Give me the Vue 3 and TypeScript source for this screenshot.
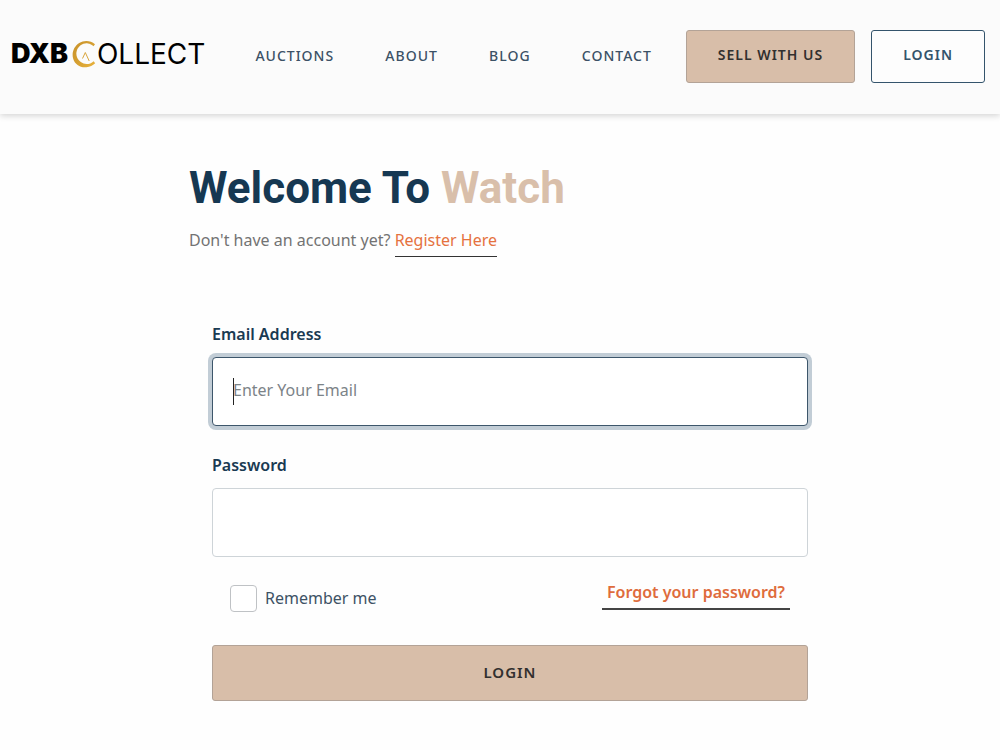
<script setup lang="ts">
import { onMounted, ref } from 'vue'

interface NavLink {
  label: string
  href: string
}

const links: NavLink[] = [
  { label: 'AUCTIONS', href: '#auctions' },
  { label: 'ABOUT', href: '#about' },
  { label: 'BLOG', href: '#blog' },
  { label: 'CONTACT', href: '#contact' },
]

const email = ref('')
const password = ref('')
const remember = ref(false)
const emailFocused = ref(false)
const emailInput = ref<HTMLInputElement | null>(null)

onMounted(() => emailInput.value?.focus())
</script>

<template>
  <header class="site-header">
    <a class="logo" href="#home">
      <span class="logo-bold">DXB</span>
      <svg class="logo-ring" viewBox="0 0 24 28" role="img" aria-label="C">
        <defs>
          <linearGradient id="gold" x1="0" y1="0" x2="1" y2="1">
            <stop offset="0" stop-color="#c8922b" />
            <stop offset="0.45" stop-color="#d39d30" />
            <stop offset="1" stop-color="#e9b33c" />
          </linearGradient>
        </defs>
        <path
          d="M23 4.200C18.500.4 12 .1 7.200 3.100C2 6.300-.6 13 1.200 18.700C3 24.700 8.600 28 14.500 27.200C17.800 26.800 20.800 25.500 23.200 23.200L21.600 21.200C17.900 24.700 12.600 24.900 8.800 22.100C5 19.400 3.500 15 4.800 10.800C6.300 5.900 11 2.800 15.800 3.400C18 3.700 20 4.700 21.500 6.300Z"
          fill="url(#gold)"
        />
        <path d="M10.500 18.500L13.300 12.500L17.200 21" fill="none" stroke="#d9a53d" stroke-width="1" />
      </svg>
      <span class="logo-light">OLLECT</span>
    </a>
    <nav class="nav" aria-label="Main">
      <a v-for="link in links" :key="link.label" :href="link.href">{{ link.label }}</a>
    </nav>
    <div class="actions">
      <button type="button" class="btn btn-sand">SELL WITH US</button>
      <button type="button" class="btn btn-outline">LOGIN</button>
    </div>
  </header>

  <main class="page">
    <div class="content">
      <h1>Welcome To <span>Watch</span></h1>
      <p class="intro">Don't have an account yet? <a href="#register">Register Here</a></p>

      <form class="form" @submit.prevent>
        <label class="field-label" for="email">Email Address</label>
        <div class="field">
          <input
            id="email"
            ref="emailInput"
            v-model="email"
            type="email"
            placeholder="Enter Your Email"
            :class="{ empty: !email }"
            @focus="emailFocused = true"
            @blur="emailFocused = false"
          />
          <span v-if="emailFocused && !email" class="caret" aria-hidden="true"></span>
        </div>

        <label class="field-label" for="password">Password</label>
        <div class="field">
          <input id="password" v-model="password" type="password" />
        </div>

        <div class="options">
          <label class="remember" for="remember">
            <input id="remember" v-model="remember" type="checkbox" />
            Remember me
          </label>
          <a class="forgot" href="#forgot">Forgot your password?</a>
        </div>

        <button type="submit" class="btn btn-sand submit">LOGIN</button>
      </form>
    </div>
  </main>
</template>

<style>
body {
  background: #fefefe;
}

#app {
  font-family: "Noto Sans", "Open Sans", sans-serif;
  font-size: 16px;
  color: #1a3a52;
}
</style>

<style scoped>
* {
  box-sizing: border-box;
}

.site-header {
  display: flex;
  align-items: center;
  min-height: 114px;
  padding: 0 15px 2px 11px;
  background: #fbfbfb;
  box-shadow: 0 2px 6px rgba(0, 0, 0, 0.16);
}

.logo {
  display: flex;
  align-items: center;
  padding-bottom: 4px;
  color: #000;
  font-family: Inter, sans-serif;
  font-size: 28px;
  line-height: 28px;
  text-decoration: none;
}

.logo-bold {
  font-size: 27px;
  font-weight: 900;
}

.logo-ring {
  width: 24px;
  height: 28px;
  margin: 0 1px 0 4px;
}

.logo-light {
  font-weight: 400;
}

.nav {
  display: flex;
  flex: 1;
  justify-content: space-between;
  margin: 0 34px 0 50px;
}

.nav a {
  color: #3b5166;
  font-size: 14px;
  font-weight: 500;
  line-height: 24px;
  letter-spacing: 1px;
  text-decoration: none;
}

.actions {
  display: flex;
  gap: 16px;
}

.btn {
  height: 53px;
  padding: 0 31px 3px;
  border-radius: 3px;
  font-family: inherit;
  font-size: 14px;
  font-weight: 600;
  letter-spacing: 1px;
  white-space: nowrap;
  cursor: pointer;
}

.btn-sand {
  border: 1px solid #b3a397;
  background: #d8bea9;
  color: #32302f;
}

.btn-outline {
  border: 1px solid #34546c;
  background: #fdfdfd;
  color: #34546c;
}

.page {
  padding: 48px 0 24px 20px;
}

.content {
  max-width: 642px;
  margin: 0 auto;
}

h1 {
  margin: 0;
  font-family: Roboto, sans-serif;
  font-size: 44px;
  font-weight: 700;
  line-height: 52px;
  color: #163852;
}

h1 span {
  color: #d9bfaa;
}

.intro {
  margin: 10px 0 0;
  color: #737373;
  line-height: 32px;
}

.intro a {
  display: inline-block;
  border-bottom: 1px solid #333;
  color: #e5723f;
  text-decoration: none;
}

.form {
  padding: 61px 23px 0;
}

.field-label {
  display: block;
  margin-bottom: 7px;
  font-weight: 600;
  line-height: 32px;
}

.field {
  position: relative;
  margin-bottom: 23px;
}

.field input {
  display: block;
  width: 100%;
  height: 69px;
  padding: 0 20px 4px;
  border: 1px solid #ced4d8;
  border-radius: 4px;
  outline: none;
  background: #fff;
  color: #1a3a52;
  font-family: inherit;
  font-size: 16px;
}

.field input::placeholder {
  color: #7c8388;
  opacity: 1;
}

.field input:focus {
  border-color: #3d566b;
  box-shadow: 0 0 0 4px #c2cdd6;
}

.field input.empty {
  caret-color: transparent;
}

.caret {
  position: absolute;
  top: 21px;
  left: 21px;
  width: 1px;
  height: 27px;
  background: #222;
}

.options {
  display: flex;
  align-items: flex-start;
  justify-content: space-between;
  padding: 0 18px;
}

.remember {
  display: flex;
  align-items: center;
  gap: 8px;
  padding-top: 4px;
  color: #3d5265;
  line-height: 28px;
}

.remember input {
  appearance: none;
  width: 27px;
  height: 27px;
  margin: 0;
  border: 1px solid #bfc2c5;
  border-radius: 4px;
  background: #fff;
}

.remember input:checked {
  background: #163852;
}

.forgot {
  padding: 0 5px 3px;
  border-bottom: 2px solid #444;
  color: #df6c3c;
  font-weight: 600;
  line-height: 25px;
  text-decoration: none;
}

.submit {
  display: block;
  width: 100%;
  height: 56px;
  margin-top: 33px;
  font-size: 15px;
}
</style>
